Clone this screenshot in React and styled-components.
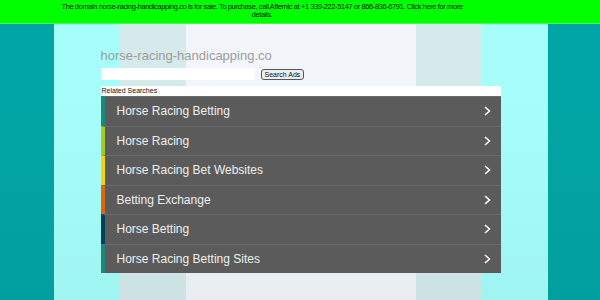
import React from 'react';
import styled, { createGlobalStyle } from 'styled-components';

const GlobalStyle = createGlobalStyle`
  html, body {
    margin: 0;
    padding: 0;
    height: 100%;
  }
  body {
    font-family: "Liberation Sans", Arial, sans-serif;
  }
  #root {
    min-height: 100%;
  }
`;

const Page = styled.div`
  min-height: 300px;
  display: flex;
  flex-direction: column;
  background:
    linear-gradient(to bottom, rgba(0, 0, 0, 0) 30%, rgba(0, 20, 30, 0.04) 100%),
    linear-gradient(
      to right,
      #02a5a5 0 54px,
      #a6fefa 54px 120px,
      #d5ebeb 120px 186px,
      #f2f6fa 186px 416px,
      #d5ebeb 416px 482px,
      #a6fefa 482px 548px,
      #02a5a5 548px 100%
    );
`;

const Banner = styled.div`
  background: #00ff00;
  border-bottom: 1px solid #3dff3d;
  height: 23px;
  display: flex;
  justify-content: flex-start;
`;

const BannerText = styled.a`
  display: block;
  width: 404px;
  margin: 3px 0 0 60px;
  font-size: 7.4px;
  letter-spacing: -0.35px;
  line-height: 8.4px;
  color: #111;
  text-align: center;
  text-decoration: none;
`;

const Content = styled.main`
  width: 400px;
  margin: 0 auto;
  padding: 24px 0 0 1px;
`;

const Title = styled.h1`
  margin: 0;
  font-size: 13px;
  font-weight: normal;
  line-height: 16px;
  color: #9c9c9c;
`;

const SearchRow = styled.form`
  display: flex;
  align-items: center;
  gap: 6px;
  margin-top: 4px;
`;

const SearchInput = styled.input`
  width: 154px;
  height: 12px;
  padding: 0;
  border: none;
  border-radius: 2px;
  background: #fff;
`;

const SearchButton = styled.button`
  height: 11px;
  padding: 0 3px;
  font-family: inherit;
  font-size: 7px;
  line-height: 9px;
  color: #111;
  background: #eeeeee;
  border: 1px solid #555;
  border-radius: 3px;
`;

const Related = styled.div`
  margin-top: 6px;
  height: 10px;
  padding-left: 1px;
  background: #fff;
  font-size: 7px;
  line-height: 10px;
  color: #111;
`;

const List = styled.ul`
  list-style: none;
  margin: 0;
  padding: 0;
  background: #5b5b5b;
`;

const Row = styled.li`
  height: 29.5px;
  box-sizing: border-box;
  display: flex;
  align-items: center;
  justify-content: space-between;
  padding: 0 10px 0 12px;
  border-top: 1px solid #6a6a6a;
  border-left: 4px solid ${(p) => p.$accent};
  font-size: 12px;
  color: #efefef;
`;

const Chevron = () => (
  <svg width="7" height="10" viewBox="0 0 7 10">
    <path d="M1 1 L5.5 5 L1 9" fill="none" stroke="#fff" strokeWidth="1.6" />
  </svg>
);

const items = [
  ['Horse Racing Betting', '#1b8a78'],
  ['Horse Racing', '#a6c924'],
  ['Horse Racing Bet Websites', '#f2d400'],
  ['Betting Exchange', '#e0650f'],
  ['Horse Betting', '#003f58'],
  ['Horse Racing Betting Sites', '#1b8a78'],
];

export default function App() {
  return (
    <>
      <GlobalStyle />
      <Page>
        <Banner>
          <BannerText href="#">
            The domain horse-racing-handicapping.co is for sale. To purchase, call Afternic at +1 339-222-5147 or
            866-836-6791. Click here for more details.
          </BannerText>
        </Banner>
        <Content>
          <Title>horse-racing-handicapping.co</Title>
          <SearchRow onSubmit={(e) => e.preventDefault()}>
            <SearchInput type="text" />
            <SearchButton type="submit">Search Ads</SearchButton>
          </SearchRow>
          <Related>Related Searches</Related>
          <List>
            {items.map(([label, accent]) => (
              <Row key={label} $accent={accent}>
                <span>{label}</span>
                <Chevron />
              </Row>
            ))}
          </List>
        </Content>
      </Page>
    </>
  );
}
